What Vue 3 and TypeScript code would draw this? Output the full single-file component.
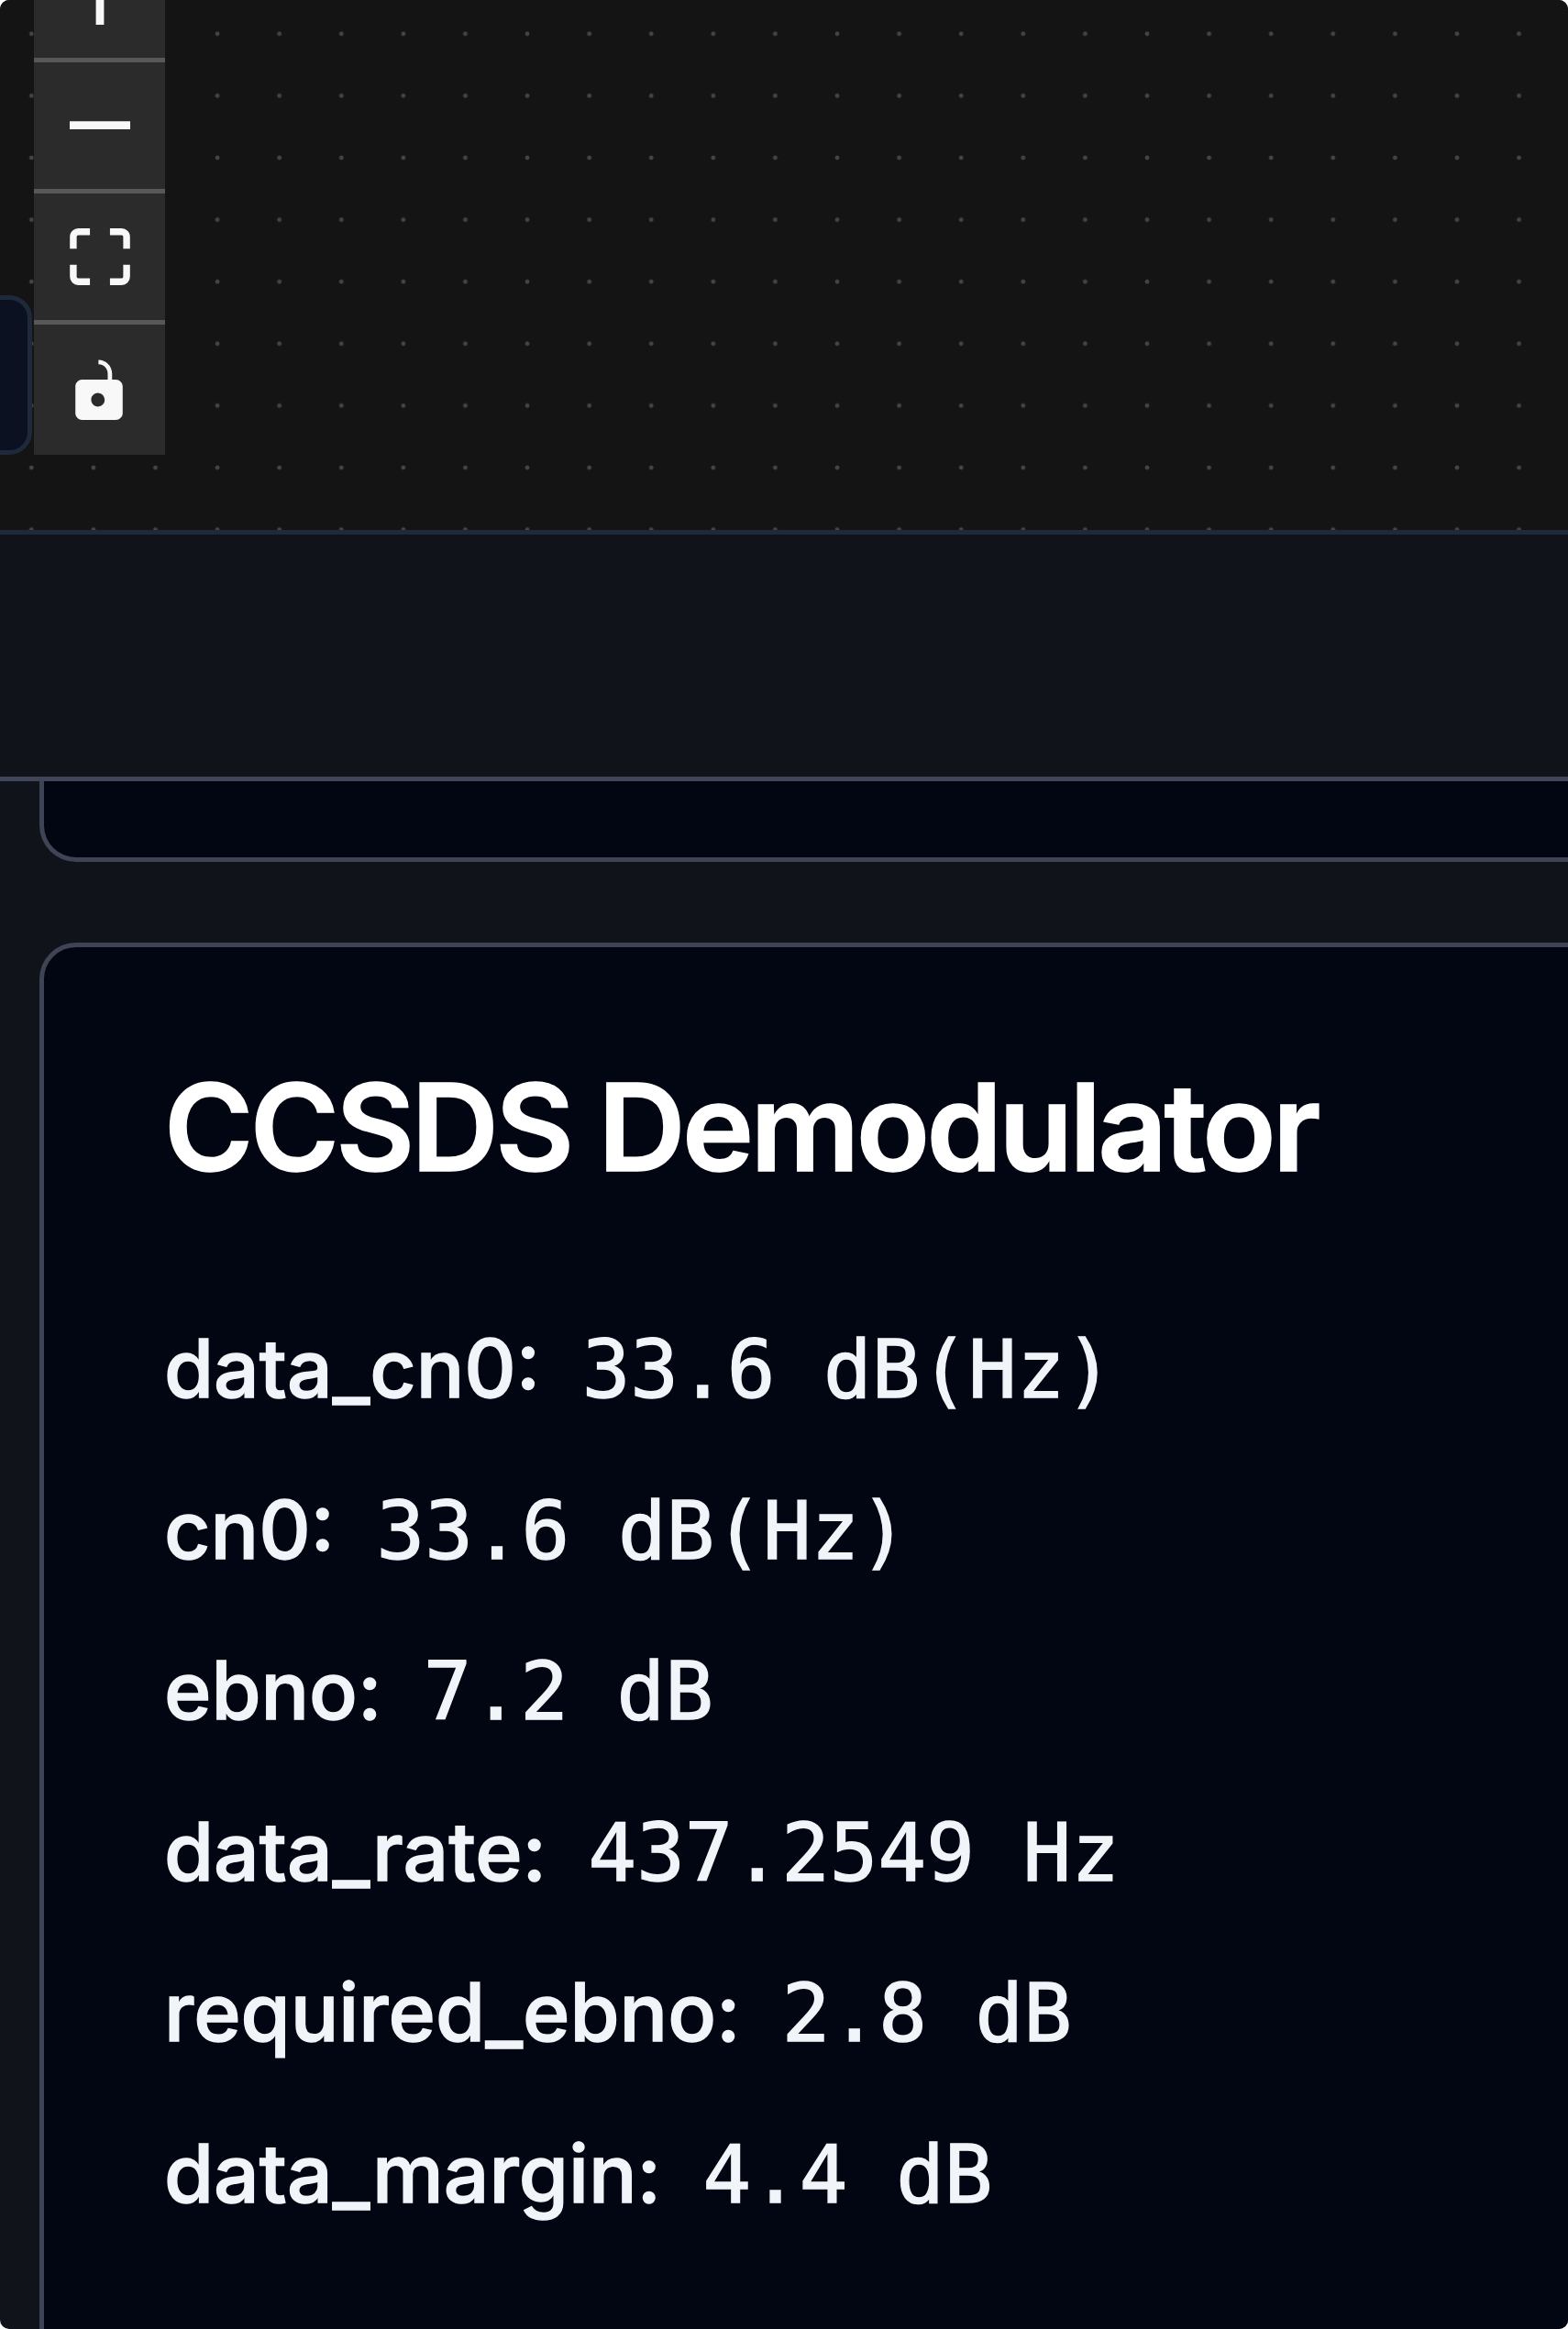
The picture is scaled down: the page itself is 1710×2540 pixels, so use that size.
<script setup lang="ts">
interface Stat {
  label: string
  value: string
}

const stats: Stat[] = [
  { label: 'data_cn0', value: '33.6 dB(Hz)' },
  { label: 'cn0', value: '33.6 dB(Hz)' },
  { label: 'ebno', value: '7.2 dB' },
  { label: 'data_rate', value: '437.2549 Hz' },
  { label: 'required_ebno', value: '2.8 dB' },
  { label: 'data_margin', value: '4.4 dB' },
]
</script>

<template>
  <div class="page">
    <section class="canvas">
      <div class="node"></div>
      <div class="controls">
        <button class="control">
          <svg viewBox="0 0 32 32" class="icon"><path d="M32 18.133H18.133V32h-4.266V18.133H0v-4.266h13.867V0h4.266v13.867H32z" /></svg>
        </button>
        <button class="control">
          <svg viewBox="0 0 32 5" class="icon icon-minus"><path d="M0 0h32v4.2H0z" /></svg>
        </button>
        <button class="control">
          <svg viewBox="0 0 32 30" class="icon icon-fit"><path d="M1.9 10.7V4.4a2.6 2.6 0 0 1 2.6-2.6h6.2M21.3 1.8h6.2a2.6 2.6 0 0 1 2.6 2.6v6.3M30.1 19.3v6.3a2.6 2.6 0 0 1-2.6 2.6h-6.2M10.7 28.2H4.5a2.6 2.6 0 0 1-2.6-2.6v-6.3" /></svg>
        </button>
        <button class="control">
          <svg viewBox="0 0 25 32" class="icon icon-lock"><path d="M21.3 10.7h-1.9V7.5C19.4 3.6 16.2.3 12.2.3v2.3c2.8 0 4.9 2.2 4.9 4.9v3.2H3.6C1.7 10.7 0 12.3 0 14.3v14.2C0 30.4 1.7 32 3.6 32h17.7c2 0 3.7-1.6 3.7-3.5V14.3c0-2-1.7-3.6-3.7-3.6zM12.5 24.9a3.6 3.6 0 1 1 0-7.1 3.6 3.6 0 0 1 0 7.1z" /></svg>
        </button>
      </div>
    </section>

    <section class="toolbar"></section>

    <section class="content">
      <div class="card card-cut"></div>
      <div class="card">
        <h2 class="title">CCSDS Demodulator</h2>
        <p v-for="stat in stats" :key="stat.label" class="stat">
          {{ stat.label }}: <code class="value">{{ stat.value }}</code>
        </p>
      </div>
    </section>
  </div>
</template>

<style>
html,
body {
  margin: 0;
  background: #ffffff;
}
</style>

<style scoped>
.page {
  width: 1710px;
  height: 2540px;
  overflow: hidden;
  background: #10131a;
  border-radius: 10px;
  font-family: Inter, "Liberation Sans", sans-serif;
  color: #f1f5f9;
}

.canvas {
  position: relative;
  height: 578px;
  overflow: hidden;
  background-color: #141414;
  background-image: radial-gradient(circle, #444444 2px, transparent 2.8px);
  background-size: 67.6px 67.6px;
  background-position: 0.5px 3px;
  border-bottom: 5px solid #1e293b;
}

.node {
  position: absolute;
  left: -60px;
  top: 322px;
  width: 95px;
  height: 174px;
  box-sizing: border-box;
  background: #0b1120;
  border: 5px solid #1e293b;
  border-radius: 25px;
}

.controls {
  position: absolute;
  left: 37px;
  top: -75px;
  width: 143px;
  display: flex;
  flex-direction: column;
}

.control {
  display: flex;
  align-items: center;
  justify-content: center;
  height: 143px;
  padding: 0;
  border: none;
  border-bottom: 5px solid #585858;
  background: #2b2b2b;
  box-sizing: border-box;
}

.control:last-child {
  border-bottom: none;
  height: 142px;
}

.icon {
  width: 66px;
  height: 66px;
  fill: #f8f8f8;
}

.icon-minus {
  height: 11px;
}

.icon-fit {
  fill: none;
  stroke: #f8f8f8;
  stroke-width: 3.6;
}

.icon-lock {
  width: 52px;
  margin-right: 2px;
}

.toolbar {
  height: 269px;
  box-sizing: border-box;
  background: #10131a;
  border-bottom: 5px solid #414558;
}

.content {
  height: 1688px;
  overflow: hidden;
  padding-left: 43px;
  display: flex;
  flex-direction: column;
  gap: 88px;
}

.card {
  flex: none;
  width: 1800px;
  box-sizing: border-box;
  background: #020512;
  border: 5px solid #3f4454;
  border-radius: 40px;
  padding: 117px 131px;
}

.card-cut {
  height: 88px;
  padding: 0;
  border-top: none;
  border-top-left-radius: 0;
}

.title {
  margin: 0 0 97px;
  font-size: 132px;
  line-height: 1.2;
  font-weight: 600;
  letter-spacing: -3.6px;
  color: #ffffff;
  -webkit-text-stroke: 1.5px #ffffff;
}

.stat {
  margin: 0;
  height: 175.5px;
  font-size: 87.5px;
  line-height: 175.5px;
  font-weight: 500;
  white-space: nowrap;
  color: #f1f5f9;
  -webkit-text-stroke: 1.4px #f1f5f9;
}

.value {
  margin-left: 22px;
  font-family: "DejaVu Sans Mono", monospace;
  font-size: 87.5px;
  font-weight: 400;
  -webkit-text-stroke: 1.4px #f1f5f9;
}
</style>
